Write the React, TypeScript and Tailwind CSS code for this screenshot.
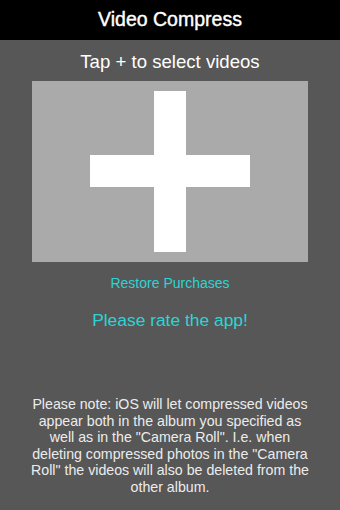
export default function App() {
  return (
    <div
      className="flex h-[510px] w-[340px] flex-col bg-[#575757]"
      style={{ fontFamily: '"Liberation Sans", Arial, sans-serif' }}
    >
      <div className="flex h-10 items-center justify-center bg-black">
        <h1 className="text-[19.5px] font-medium text-white [-webkit-text-stroke:0.4px_white]">Video Compress</h1>
      </div>
      <div className="flex flex-col items-center">
        <p className="mt-[11px] text-[18.6px] leading-[22px] text-white">Tap + to select videos</p>
        <button className="mt-[8px] flex h-[181px] w-[276px] items-center justify-center bg-[#aaaaaa]">
          <div className="relative h-[161px] w-[160px]">
            <div className="absolute left-[64px] top-0 h-[161px] w-[32px] bg-white" />
            <div className="absolute left-0 top-[64px] h-[32px] w-[160px] bg-white" />
          </div>
        </button>
        <button className="mt-[12px] text-[14px] leading-[18px] text-[#2fd3d3]">Restore Purchases</button>
        <button className="mt-[17px] text-[17.4px] leading-[22px] text-[#2fd3d3]">Please rate the app!</button>
        <p className="mt-[65px] w-[284px] text-center text-[14.2px] leading-[16.5px] text-[#ececec]">
          Please note: iOS will let compressed videos appear both in the album you specified as well as in the "Camera
          Roll". I.e. when deleting compressed photos in the "Camera Roll" the videos will also be deleted from the
          other album.
        </p>
      </div>
    </div>
  );
}
